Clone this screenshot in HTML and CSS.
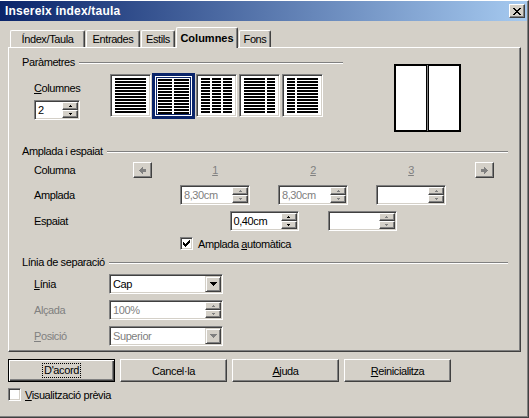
FILE: index.html
```html
<!DOCTYPE html>
<html lang="ca">
<head>
<meta charset="utf-8">
<title>Insereix índex/taula</title>
<link rel="stylesheet" href="styles.css">
</head>
<body>
<div class="window">
  <div class="titlebar">
    <span class="title">Insereix índex/taula</span>
    <span class="close"><svg width="8" height="7" viewBox="0 0 8 7" shape-rendering="crispEdges"><path d="M0 0h2v1H0z M6 0h2v1H6z M1 1h2v1H1z M5 1h2v1H5z M2 2h4v1H2z M3 3h2v1H3z M2 4h4v1H2z M1 5h2v1H1z M5 5h2v1H5z M0 6h2v1H0z M6 6h2v1H6z"/></svg></span>
  </div>

  <div class="tabs">
    <div class="tab t1">Índex/Taula</div>
    <div class="tab t2">Entrades</div>
    <div class="tab t3">Estils</div>
    <div class="tab t4 active">Columnes</div>
    <div class="tab t5">Fons</div>
  </div>

  <div class="panel">
    <div class="params">
      <div class="params-main">
        <div class="legend"><span>Paràmetres</span><i class="rule"></i></div>
        <div class="params-body">
          <div class="colctl">
            <div class="lbl"><u>C</u>olumnes</div>
            <div class="field spin w46"><span class="val">2</span><span class="spinbtns"><b class="up"></b><b class="dn"></b></span></div>
          </div>
          <div class="presets">
            <div class="preset"><div class="lines"><i class="l31"></i></div></div>
            <div class="preset sel"><div class="lines"><i class="l14"></i><i class="l15"></i></div></div>
            <div class="preset"><div class="lines"><i class="l9"></i><i class="l9"></i><i class="l9"></i></div></div>
            <div class="preset"><div class="lines"><i class="l21"></i><i class="l8"></i></div></div>
            <div class="preset"><div class="lines"><i class="l8"></i><i class="l21"></i></div></div>
          </div>
        </div>
      </div>
      <svg class="preview" width="67" height="68" viewBox="0 0 67 68" shape-rendering="crispEdges">
        <rect x="1" y="1" width="65" height="66" fill="#fff" stroke="#000" stroke-width="2"/>
        <rect x="32" y="1" width="1" height="66" fill="#000"/>
        <rect x="33" y="1" width="1" height="66" fill="#808080"/>
        <rect x="34" y="1" width="1" height="66" fill="#000"/>
      </svg>
    </div>

    <div class="legend sec2"><span>Amplada i espaiat</span><i class="rule"></i></div>
    <div class="widths">
      <span class="lbl g-label r1">Columna</span>
      <span class="navbtn g-prev r1"><svg width="7" height="7" viewBox="0 0 7 7" shape-rendering="crispEdges"><path d="M3 0h1v7H3z M2 1h1v5H2z M1 2h1v3H1z M0 3h1v1H0z M4 2h3v3H4z"/></svg></span>
      <u class="num g-c1 r1">1</u>
      <u class="num g-c2 r1">2</u>
      <u class="num g-c3 r1">3</u>
      <span class="navbtn g-next r1"><svg width="7" height="7" viewBox="0 0 7 7" shape-rendering="crispEdges"><path d="M3 0h1v7H3z M4 1h1v5H4z M5 2h1v3H5z M6 3h1v1H6z M0 2h3v3H0z"/></svg></span>

      <span class="lbl g-label r2">Amplada</span>
      <div class="field spin w70 g-c1 r2 off"><span class="val">8,30cm</span><span class="spinbtns"><b class="up"></b><b class="dn"></b></span></div>
      <div class="field spin w70 g-c2 r2 off"><span class="val">8,30cm</span><span class="spinbtns"><b class="up"></b><b class="dn"></b></span></div>
      <div class="field spin w70 g-c3 r2 off"><span class="val"></span><span class="spinbtns"><b class="up"></b><b class="dn"></b></span></div>

      <span class="lbl g-label r3">Espaiat</span>
      <div class="field spin w69 g-s1 r3"><span class="val">0,40cm</span><span class="spinbtns"><b class="up"></b><b class="dn"></b></span></div>
      <div class="field spin w69 g-s2 r3 off"><span class="val"></span><span class="spinbtns"><b class="up"></b><b class="dn"></b></span></div>

      <label class="checkline g-chk r4"><span class="chk"><svg width="7" height="7" viewBox="0 0 7 7" shape-rendering="crispEdges"><path d="M6 0h1v1H6z M5 1h2v1H5z M0 2h1v1H0z M4 2h3v1H4z M0 3h2v1H0z M3 3h3v1H3z M0 4h5v1H0z M1 5h3v1H1z M2 6h1v1H2z"/></svg></span><span>Amplada <u>a</u>utomàtica</span></label>
    </div>

    <div class="legend sec3"><span>Línia de separació</span><i class="rule"></i></div>
    <div class="sep">
      <span class="lbl"><u>L</u>ínia</span>
      <div class="field combo w114"><span class="val">Cap</span><span class="dropbtn"><svg width="7" height="4" viewBox="0 0 7 4" shape-rendering="crispEdges"><path d="M0 0h7v1H0z M1 1h5v1H1z M2 2h3v1H2z M3 3h1v1H3z"/></svg></span></div>
      <span class="lbl dis">Alçada</span>
      <div class="field spin w114 off"><span class="val">100%</span><span class="spinbtns"><b class="up"></b><b class="dn"></b></span></div>
      <span class="lbl dis"><u>P</u>osició</span>
      <div class="field combo w114 off"><span class="val">Superior</span><span class="dropbtn"><svg width="7" height="4" viewBox="0 0 7 4" shape-rendering="crispEdges"><path d="M0 0h7v1H0z M1 1h5v1H1z M2 2h3v1H2z M3 3h1v1H3z"/></svg></span></div>
    </div>
  </div>

  <div class="buttons">
    <div class="btn default"><span class="focus">D'acord</span></div>
    <div class="btn">Cancel·la</div>
    <div class="btn"><span><u>A</u>juda</span></div>
    <div class="btn"><span><u>R</u>einicialitza</span></div>
  </div>

  <label class="preview-row"><span class="chk"></span><span><u>V</u>isualització prèvia</span></label>
</div>
</body>
</html>
```
FILE: styles.css
```css
* { box-sizing: border-box; }
html, body { margin: 0; padding: 0; }
body {
  width: 529px;
  height: 418px;
  overflow: hidden;
  background: #D4D0C8;
  font-family: "Liberation Sans", Arial, sans-serif;
  font-size: 11px;
  color: #000;
}
u { text-decoration: underline; }

.window {
  width: 529px;
  height: 418px;
  display: flex;
  flex-direction: column;
  background: #D4D0C8;
  border-top: 1px solid #fff;
  border-right: 1px solid #404040;
  border-bottom: 1px solid #404040;
  box-shadow: inset -1px -1px 0 #808080;
  letter-spacing: -0.4px;
}

/* title bar */
.titlebar {
  height: 20px;
  margin-right: 1px;
  padding-left: 5px;
  display: flex;
  align-items: center;
  justify-content: space-between;
  background: linear-gradient(to right, #0A246A, #A6CAF0);
}
.title {
  color: #fff;
  font-weight: bold;
  font-size: 12px;
  letter-spacing: 0.2px;
}
.close {
  width: 16px;
  height: 14px;
  margin-right: 2px;
  display: flex;
  align-items: center;
  justify-content: center;
  background: #D4D0C8;
  border: 1px solid;
  border-color: #fff #404040 #404040 #fff;
  box-shadow: inset -1px -1px 0 #808080;
}

/* tabs */
.tabs {
  display: flex;
  align-items: flex-end;
  gap: 1px;
  height: 20px;
  margin-top: 6px;
  padding-left: 10px;
  position: relative;
  z-index: 1;
}
.tab {
  height: 17px;
  display: flex;
  align-items: center;
  justify-content: center;
  background: #D4D0C8;
  border: 1px solid #fff;
  border-bottom: 0;
  border-right-color: #404040;
  box-shadow: inset -1px 0 0 #808080;
  border-radius: 2px 2px 0 0;
}
.tab.active {
  height: 21px;
  margin-bottom: -1px;
  font-weight: bold;
  letter-spacing: 0;
}
.t1 { width: 75px; }
.t2 { width: 54px; }
.t3 { width: 34px; }
.t4 { width: 62px; }
.t5 { width: 32px; }

/* panel */
.panel {
  height: 305px;
  margin: 0 7px 0 8px;
  padding: 8px 12px 0 13px;
  border: 1px solid #fff;
  border-right-color: #404040;
  border-bottom-color: #404040;
  box-shadow: inset -1px -1px 0 #808080;
}
.legend {
  display: flex;
  align-items: center;
  height: 13px;
  line-height: 13px;
}
.rule {
  flex: 1;
  margin-left: 4px;
  border-top: 1px solid #808080;
  border-bottom: 1px solid #fff;
}
.lbl { line-height: 13px; }
.lbl.dis { color: #808080; }

.params { display: flex; align-items: flex-start; }
.params-main { width: 321px; }
.params-body {
  display: flex;
  align-items: flex-start;
  margin-top: 4px;
  padding-left: 12px;
}
.colctl { width: 76px; padding-top: 9px; }
.colctl .field { margin-top: 5px; }
.presets {
  display: flex;
  align-items: flex-start;
  gap: 2px;
  margin-top: 1px;
}
.preset {
  width: 41px;
  height: 43px;
  display: flex;
  align-items: center;
  justify-content: center;
  background: #fff;
  border: 1px solid;
  border-color: #808080 #fff #fff #808080;
  box-shadow: inset 1px 1px 0 #404040, inset -1px -1px 0 #D4D0C8;
}
.preset.sel {
  width: 43px;
  height: 46px;
  margin: -1px -1px 0 -1px;
  border: 3px solid #0A246A;
  box-shadow: inset 0 0 0 1px #fff, inset 0 0 0 2px #0A246A;
}
.lines { display: flex; gap: 2px; width: 31px; height: 35px; }
.lines i {
  display: block;
  height: 35px;
  background: repeating-linear-gradient(to bottom, #000 0 2px, transparent 2px 3px);
}
.l31 { width: 31px; }
.l21 { width: 21px; }
.l15 { width: 15px; }
.l14 { width: 14px; }
.l9 { width: 9px; }
.l8 { width: 8px; }
.preview { display: block; margin: 8px 0 0 51px; }

/* fields */
.field {
  height: 20px;
  padding: 1px;
  display: flex;
  align-items: stretch;
  background: #fff;
  border: 1px solid;
  border-color: #808080 #fff #fff #808080;
  box-shadow: inset 1px 1px 0 #404040, inset -1px -1px 0 #D4D0C8;
}
.field .val {
  flex: 1;
  padding-left: 2px;
  line-height: 16px;
  white-space: nowrap;
  overflow: hidden;
}
.field.off .val { color: #808080; }
.w46 { width: 46px; }
.w69 { width: 69px; }
.w70 { width: 70px; }
.w114 { width: 114px; }

.spinbtns { width: 16px; display: flex; flex-direction: column; }
.spinbtns b {
  height: 8px;
  display: flex;
  align-items: center;
  justify-content: center;
  background: #D4D0C8;
  border: 1px solid;
  border-color: #fff #404040 #404040 #fff;
  box-shadow: inset -1px -1px 0 #808080;
  color: #000;
}
.off .spinbtns b { color: #808080; }
.spinbtns b::after {
  content: "";
  width: 1px;
  height: 1px;
  background: currentColor;
}
.spinbtns b.up::after { margin-top: -2px; box-shadow: -1px 1px 0, 0 1px 0, 1px 1px 0; }
.spinbtns b.dn::after { margin-top: 0; box-shadow: -1px -1px 0, 0 -1px 0, 1px -1px 0; }

.dropbtn {
  width: 16px;
  display: flex;
  align-items: center;
  justify-content: center;
  background: #D4D0C8;
  border: 1px solid;
  border-color: #D4D0C8 #404040 #404040 #D4D0C8;
  box-shadow: inset 1px 1px 0 #fff, inset -1px -1px 0 #808080;
}
.dropbtn svg { fill: #000; }
.off .dropbtn svg { fill: #808080; }

/* width grid */
.sec2 { margin-top: 13px; }
.widths {
  display: grid;
  grid-template-columns: 99px 47px 70px 28px 70px 28px 70px 29px 19px;
  grid-template-rows: 17px 20px 20px 13px;
  row-gap: 6px;
  margin: 4px 0 0 12px;
}
.r1 { grid-row: 1; }
.r2 { grid-row: 2; }
.r3 { grid-row: 3; }
.r4 { grid-row: 4; }
.g-label { grid-column: 1; align-self: center; }
.g-prev { grid-column: 2; }
.g-c1 { grid-column: 3; }
.g-c2 { grid-column: 5; }
.g-c3 { grid-column: 7; }
.g-next { grid-column: 9; }
.g-s1 { grid-column: 3 / 6; justify-self: center; }
.g-s2 { grid-column: 5 / 8; justify-self: center; }
.g-chk { grid-column: 3 / -1; }
.num {
  color: #808080;
  justify-self: center;
  align-self: center;
  line-height: 13px;
}
.navbtn {
  width: 19px;
  height: 16px;
  display: flex;
  align-items: center;
  justify-content: center;
  background: #D4D0C8;
  border: 1px solid;
  border-color: #fff #404040 #404040 #fff;
  box-shadow: inset -1px -1px 0 #808080;
}
.navbtn svg { fill: #808080; }

.checkline { display: flex; align-items: center; gap: 5px; }
.chk {
  width: 13px;
  height: 13px;
  display: flex;
  align-items: center;
  justify-content: center;
  background: #fff;
  border: 1px solid;
  border-color: #808080 #fff #fff #808080;
  box-shadow: inset 1px 1px 0 #404040, inset -1px -1px 0 #D4D0C8;
}

/* separator line section */
.sec3 { margin-top: 6px; }
.sep {
  display: grid;
  grid-template-columns: 75px 114px;
  grid-auto-rows: 20px;
  row-gap: 6px;
  margin: 5px 0 0 12px;
}
.sep .lbl { align-self: center; }

/* buttons */
.buttons {
  display: flex;
  gap: 5px;
  margin: 7px 0 0 8px;
}
.btn {
  width: 107px;
  height: 23px;
  display: flex;
  align-items: center;
  justify-content: center;
  border: 1px solid;
  border-color: #fff #404040 #404040 #fff;
  box-shadow: inset -1px -1px 0 #808080;
}
.btn.default {
  border-color: #000;
  box-shadow: inset 1px 1px 0 #fff, inset -1px -1px 0 #404040, inset -2px -2px 0 #808080;
}
.focus {
  outline: 1px dotted #000;
  padding: 0 1px;
  line-height: 13px;
}
.preview-row {
  display: flex;
  align-items: center;
  gap: 4px;
  margin: 6px 0 0 8px;
}
```
